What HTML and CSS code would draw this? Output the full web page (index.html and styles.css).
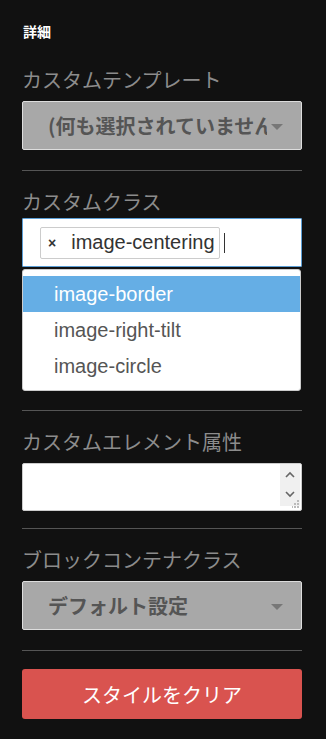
FILE: index.html
```html
<!DOCTYPE html>
<html lang="ja">
<head>
<meta charset="utf-8">
<link rel="stylesheet" href="styles.css">
</head>
<body>
<div class="panel">
  <div class="heading">詳細</div>

  <section class="field first">
    <div class="label">カスタムテンプレート</div>
    <div class="select"><span class="select-text">(何も選択されていません)</span><span class="caret"></span></div>
  </section>

  <hr class="divider">

  <section class="field field-tags">
    <div class="label label-tight">カスタムクラス</div>
    <div class="tag-input">
      <span class="tag"><span class="tag-x">×</span>image-centering</span>
      <span class="cursor"></span>
    </div>
    <div class="under"></div>
    <ul class="dropdown">
      <li class="opt active">image-border</li>
      <li class="opt">image-right-tilt</li>
      <li class="opt">image-circle</li>
    </ul>
  </section>

  <hr class="divider">

  <section class="field">
    <div class="label">カスタムエレメント属性</div>
    <div class="textarea">
      <div class="spin">
        <svg class="spin-icon" width="12" height="40" viewBox="0 0 12 40">
          <path d="M2 13 L6 9 L10 13" fill="none" stroke="#666" stroke-width="1.6"/>
          <path d="M2 28 L6 32 L10 28" fill="none" stroke="#666" stroke-width="1.6"/>
        </svg>
        <svg class="grip" width="8" height="8" viewBox="0 0 8 8">
          <rect x="5" y="0" width="2" height="2" fill="#bbb"/>
          <rect x="2" y="3" width="2" height="2" fill="#bbb"/>
          <rect x="5" y="3" width="2" height="2" fill="#bbb"/>
          <rect x="-1" y="6" width="2" height="2" fill="#bbb"/>
          <rect x="2" y="6" width="2" height="2" fill="#bbb"/>
          <rect x="5" y="6" width="2" height="2" fill="#bbb"/>
        </svg>
      </div>
    </div>
  </section>

  <hr class="divider">

  <section class="field">
    <div class="label">ブロックコンテナクラス</div>
    <div class="select"><span class="select-text">デフォルト設定</span><span class="caret"></span></div>
  </section>

  <hr class="divider last">

  <button class="clear-btn">スタイルをクリア</button>
</div>
</body>
</html>
```

FILE: styles.css
```css
html, body {
  margin: 0;
  padding: 0;
  background: #111111;
}

.panel {
  width: 280px;
  padding: 21px 24px 0 22px;
  font-family: "Noto Sans CJK JP", "Liberation Sans", sans-serif;
}

.heading {
  color: #ffffff;
  font-weight: bold;
  font-size: 14px;
  line-height: 20px;
  margin-left: 1px;
}

.field {
  display: flex;
  flex-direction: column;
}

.field.first {
  margin-top: 25px;
}

.label {
  color: #8c8c8c;
  font-size: 20px;
  line-height: 28px;
  margin-bottom: 7px;
  white-space: nowrap;
}

.label.label-tight {
  margin-bottom: 2px;
}

.select {
  box-sizing: border-box;
  height: 49px;
  background: #a8a8a8;
  border: 1px solid #dddddd;
  border-radius: 2px;
  display: flex;
  align-items: center;
  padding: 0 18px 0 25px;
  gap: 4px;
}

.select-text {
  flex: 1;
  min-width: 0;
  overflow: hidden;
  white-space: nowrap;
  color: #555555;
  font-weight: bold;
  font-size: 20px;
  line-height: 28px;
}

.caret {
  flex: none;
  width: 0;
  height: 0;
  border-left: 6px solid transparent;
  border-right: 6px solid transparent;
  border-top: 6px solid #777777;
  margin-top: 2px;
}

.divider {
  border: 0;
  border-top: 1px solid #555555;
  margin: 20px 0 17px;
  height: 0;
}

.divider.last {
  margin-bottom: 18px;
}

.field-tags {
  position: relative;
}

.tag-input {
  box-sizing: border-box;
  height: 49px;
  background: #ffffff;
  border: 1px solid #5c9fd6;
  border-radius: 1px;
  display: flex;
  align-items: center;
  padding: 0 0 0 17px;
  gap: 4px;
}

.tag {
  box-sizing: border-box;
  height: 32px;
  display: flex;
  align-items: center;
  border: 1px solid #cccccc;
  border-radius: 2px;
  padding: 0 4px 0 7px;
  font-family: "Liberation Sans", Arial, sans-serif;
  font-size: 20px;
  color: #333333;
}

.tag-x {
  font-size: 14px;
  font-weight: bold;
  color: #333;
  margin-right: 15px;
}

.cursor {
  width: 1px;
  height: 20px;
  background: #333;
}

.under {
  height: 123px;
}

.dropdown {
  position: absolute;
  left: 0;
  right: 1px;
  top: 81px;
  margin: 0;
  padding: 6px 0;
  list-style: none;
  background: #ffffff;
  border: 1px solid #cccccc;
  border-radius: 3px;
}

.opt {
  height: 36px;
  line-height: 36px;
  padding-left: 31px;
  font-family: "Liberation Sans", Arial, sans-serif;
  font-size: 20px;
  color: #555555;
}

.opt.active {
  background: #65aee5;
  color: #ffffff;
}

.textarea {
  box-sizing: border-box;
  height: 48px;
  margin-bottom: -3px;
  background: #ffffff;
  border: 1px solid #cccccc;
  border-radius: 2px;
  display: flex;
  justify-content: flex-end;
}

.spin {
  width: 20px;
  height: 42px;
  margin: 0 1px 0 0;
  background: #f0f0f0;
  position: relative;
  display: flex;
  justify-content: center;
}

.grip {
  position: absolute;
  right: 0;
  bottom: -2px;
}

.clear-btn {
  display: block;
  width: 280px;
  height: 50px;
  border: 0;
  border-radius: 3px;
  background: #d9534f;
  color: #ffffff;
  font-family: "Noto Sans CJK JP", sans-serif;
  font-size: 20px;
  padding: 0;
}
```
